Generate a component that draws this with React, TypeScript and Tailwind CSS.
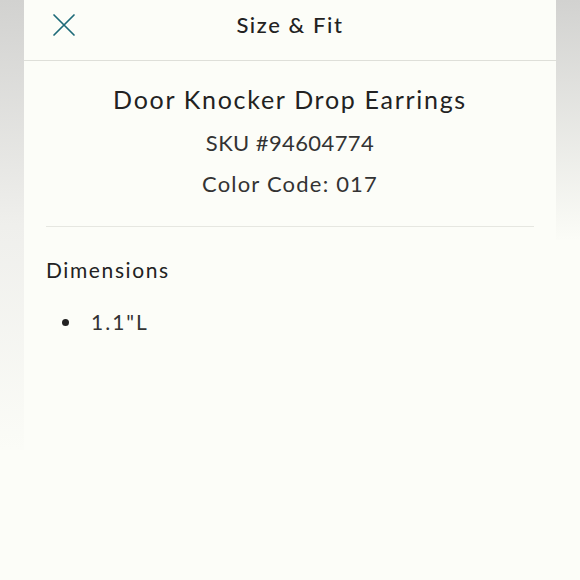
import React from 'react'

const CloseIcon = () => (
    <svg width="24" height="24" viewBox="0 0 24 24" fill="none" stroke="#1d6a78" strokeWidth="1.7" strokeLinecap="round">
        <path d="M2 2 L22 22 M22 2 L2 22" />
    </svg>
)

const App = () => {
    return (
        <div className="flex w-[580px] h-[580px] bg-[#fcfdf8] text-[#222222]" style={{ fontFamily: 'Lato, "Noto Sans", sans-serif' }}>
            <div className="w-[24px] h-[450px] bg-gradient-to-b from-[#d2d2d0] via-[#efefec] to-[#fbfcf7]" />

            <section className="flex-1 flex flex-col">
                {/* header */}
                <div className="relative h-[61px] border-b border-[#dedfd9] flex items-center justify-center">
                    <button className="absolute left-[28px] top-[13px]">
                        <CloseIcon />
                    </button>
                    <p className="text-[22px] font-medium tracking-[1.6px] -mt-[12px]">Size &amp; Fit</p>
                </div>

                <div className="px-[22px]">
                    <div className="flex flex-col items-center pt-[20px] pb-[27px] border-b border-[#e6e7e1]">
                        <h1 className="text-[25px] leading-[36px] tracking-[1.7px]">Door Knocker Drop Earrings</h1>
                        <p className="text-[22px] leading-[30px] mt-[11px] tracking-[0.4px] text-[#333]">SKU #94604774</p>
                        <p className="text-[22px] leading-[30px] mt-[11px] tracking-[1.2px] text-[#333]">Color Code: 017</p>
                    </div>

                    <div className="pt-[28px]">
                        <p className="text-[21px] leading-[30px] tracking-[1.6px]">Dimensions</p>
                        <ul className="mt-[22px] pl-[16px]">
                            <li className="flex items-center text-[21px] leading-[30px] text-[#333]">
                                <span className="w-[7px] h-[7px] rounded-full bg-[#222]" />
                                <span className="ml-[22px] tracking-[2px]">1.1"L</span>
                            </li>
                        </ul>
                    </div>
                </div>
            </section>

            <div className="w-[24px] h-[240px] bg-gradient-to-b from-[#d2d2d0] to-[#fbfcf7]" />
        </div>
    )
}

export default App
